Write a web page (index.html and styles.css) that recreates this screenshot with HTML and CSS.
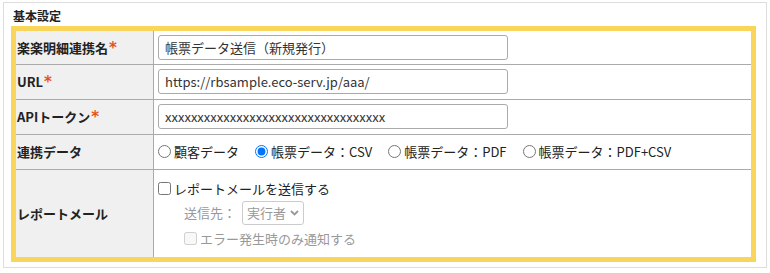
FILE: index.html
```html
<!DOCTYPE html>
<html>
<head>
    <meta charset="utf-8">
    <title>基本設定</title>
    <link rel="stylesheet" href="styles.css">
</head>
<body>
    <div class="panel">
        <h2 class="panel-title">基本設定</h2>
        <div class="highlight">
            <table class="form-table">
                <tr class="row-first">
                    <th>楽楽明細連携名<span class="req">*</span></th>
                    <td><input type="text" class="textField" value="帳票データ送信（新規発行）"></td>
                </tr>
                <tr>
                    <th>URL<span class="req">*</span></th>
                    <td><input type="text" class="textField" value="https://rbsample.eco-serv.jp/aaa/"></td>
                </tr>
                <tr>
                    <th>APIトークン<span class="req">*</span></th>
                    <td><input type="text" class="textField" value="xxxxxxxxxxxxxxxxxxxxxxxxxxxxxxxxxx"></td>
                </tr>
                <tr>
                    <th>連携データ</th>
                    <td>
                        <div class="radios">
                            <label><input type="radio" name="dataType">顧客データ</label>
                            <label><input type="radio" name="dataType" checked>帳票データ：CSV</label>
                            <label><input type="radio" name="dataType">帳票データ：PDF</label>
                            <label><input type="radio" name="dataType">帳票データ：PDF+CSV</label>
                        </div>
                    </td>
                </tr>
                <tr class="row-last">
                    <th>レポートメール</th>
                    <td>
                        <label class="check"><input type="checkbox">レポートメールを送信する</label>
                        <div class="sub">
                            <div class="sub-line">
                                <span>送信先：</span>
                                <span class="fake-select">実行者<svg width="9" height="6" viewBox="0 0 9 6"><path d="M1 1l3.5 3.5L8 1" fill="none" stroke="#999" stroke-width="1.8"/></svg></span>
                            </div>
                            <label class="check disabled"><input type="checkbox" disabled>エラー発生時のみ通知する</label>
                        </div>
                    </td>
                </tr>
            </table>
        </div>
    </div>
</body>
</html>
```
FILE: styles.css
```css
body {
    margin: 0;
    font-family: "Noto Sans CJK JP", sans-serif;
    font-size: 13px;
    color: #222;
}
.panel {
    width: 745px;
    height: 259px;
    margin: 2px 0 0 3px;
    padding: 5px 10px 0 7px;
    border: 1px solid #ddd;
}
.panel-title {
    margin: 0 0 0 2px;
    height: 18px;
    line-height: 16px;
    font-size: 12px;
    font-weight: bold;
}
.highlight {
    border: 5px solid #f9d55b;
}
.form-table {
    width: 100%;
    border-collapse: collapse;
}
.form-table th {
    width: 136px;
    padding: 0 0 0 1px;
    background-color: #f0f0f0;
    border-right: 1px solid #aaa;
    border-bottom: 1px solid #aaa;
    text-align: left;
    font-weight: bold;
    white-space: nowrap;
}
.form-table td {
    padding: 0 0 0 4px;
    border-bottom: 1px solid #aaa;
}
.form-table tr {
    height: 35px;
}
.form-table .row-first {
    height: 33px;
}
.form-table .row-last {
    height: 88px;
}
.form-table .row-last th,
.form-table .row-last td {
    border-bottom: none;
}
.req {
    margin-left: 1px;
    font-family: "DejaVu Sans", sans-serif;
    font-size: 15px;
    line-height: 13px;
    color: #e8501e;
}
.textField {
    box-sizing: border-box;
    width: 350px;
    height: 25px;
    padding: 0 6px;
    border: 1px solid #aaa;
    border-radius: 3px;
    font-family: "Noto Sans CJK JP", sans-serif;
    font-size: 13px;
    color: #333;
}
.radios {
    display: flex;
    gap: 16px;
}
.radios label,
.check {
    display: flex;
    align-items: center;
}
.radios input,
.check input {
    margin: 0 3px 0 0;
    width: 13px;
    height: 13px;
}
.sub {
    padding-left: 26px;
}
.sub-line {
    display: flex;
    align-items: center;
    gap: 6px;
    margin: 3px 0 4px;
    color: #999;
}
.fake-select {
    display: inline-flex;
    align-items: center;
    gap: 4px;
    height: 22px;
    padding: 0 4px 0 4px;
    border: 1px solid #ccc;
    border-radius: 3px;
    color: #999;
}
.disabled {
    color: #999;
}
```
